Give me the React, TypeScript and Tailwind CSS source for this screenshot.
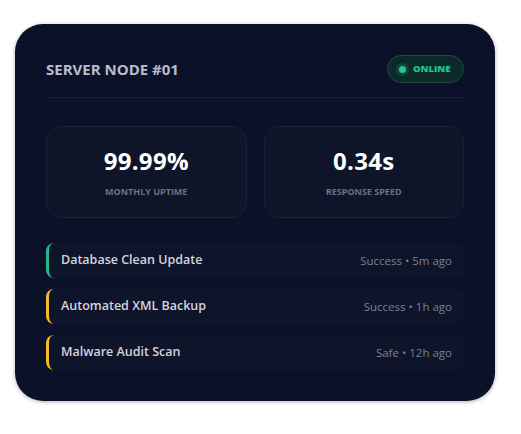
import React from 'react';

const tasks = [
  { name: 'Database Clean Update', meta: 'Success • 5m ago', bar: 'border-l-[#22b98a]' },
  { name: 'Automated XML Backup', meta: 'Success • 1h ago', bar: 'border-l-[#f5b829]' },
  { name: 'Malware Audit Scan', meta: 'Safe • 12h ago', bar: 'border-l-[#f5b829]' },
];

const stats = [
  { value: '99.99%', label: 'MONTHLY UPTIME' },
  { value: '0.34s', label: 'RESPONSE SPEED' },
];

const App = () => {
  return (
    <div className="min-h-screen bg-white pt-6 pl-[15px]" style={{ fontFamily: '"Open Sans", "Noto Sans", sans-serif' }}>
      <div className="w-[480px] h-[377px] rounded-[28px] bg-[#0b1128] px-[31px] pt-[31px] shadow-[0_1px_4px_rgba(0,0,0,0.3)]">
        {/* Header */}
        <div className="flex items-center justify-between pb-[14px] border-b border-[#1a2137]">
          <h2 className="text-[15px] font-bold text-[#b9bdcb]">SERVER NODE #01</h2>
          <div className="flex items-center gap-[7px] h-7 w-[77px] pl-[11px] rounded-full border border-[#1d4a3d] bg-[#0d2a2a]">
            <span className="w-[7px] h-[7px] rounded-full bg-[#22c58b] shadow-[0_0_0_3px_rgba(34,197,139,0.18)]"></span>
            <span className="text-[9.5px] font-extrabold text-[#22c58b]">ONLINE</span>
          </div>
        </div>

        {/* Stats */}
        <div className="grid grid-cols-2 gap-[17px] mt-[28px]">
          {stats.map((s) => (
            <div
              key={s.label}
              className="h-[92px] rounded-2xl border border-[#1b2236] bg-[#0f1529] flex flex-col items-center justify-center pt-[4px]"
            >
              <div className="text-[24px] leading-none font-bold text-white tracking-[0.3px]">{s.value}</div>
              <div className="mt-[12px] text-[9px] font-bold text-[#6b7183]">{s.label}</div>
            </div>
          ))}
        </div>

        {/* Task log */}
        <div className="mt-[25px] flex flex-col gap-[11px]">
          {tasks.map((t) => (
            <div
              key={t.name}
              className={`h-[35px] flex items-center justify-between rounded-lg border-l-[3px] ${t.bar} bg-[#0e142a] pl-[12px] pr-[12px]`}
            >
              <span className="text-[12.5px] font-semibold text-[#d2d5df]">{t.name}</span>
              <span className="text-[11.5px] text-[#7a8195]">{t.meta}</span>
            </div>
          ))}
        </div>
      </div>
    </div>
  );
};

export default App;
